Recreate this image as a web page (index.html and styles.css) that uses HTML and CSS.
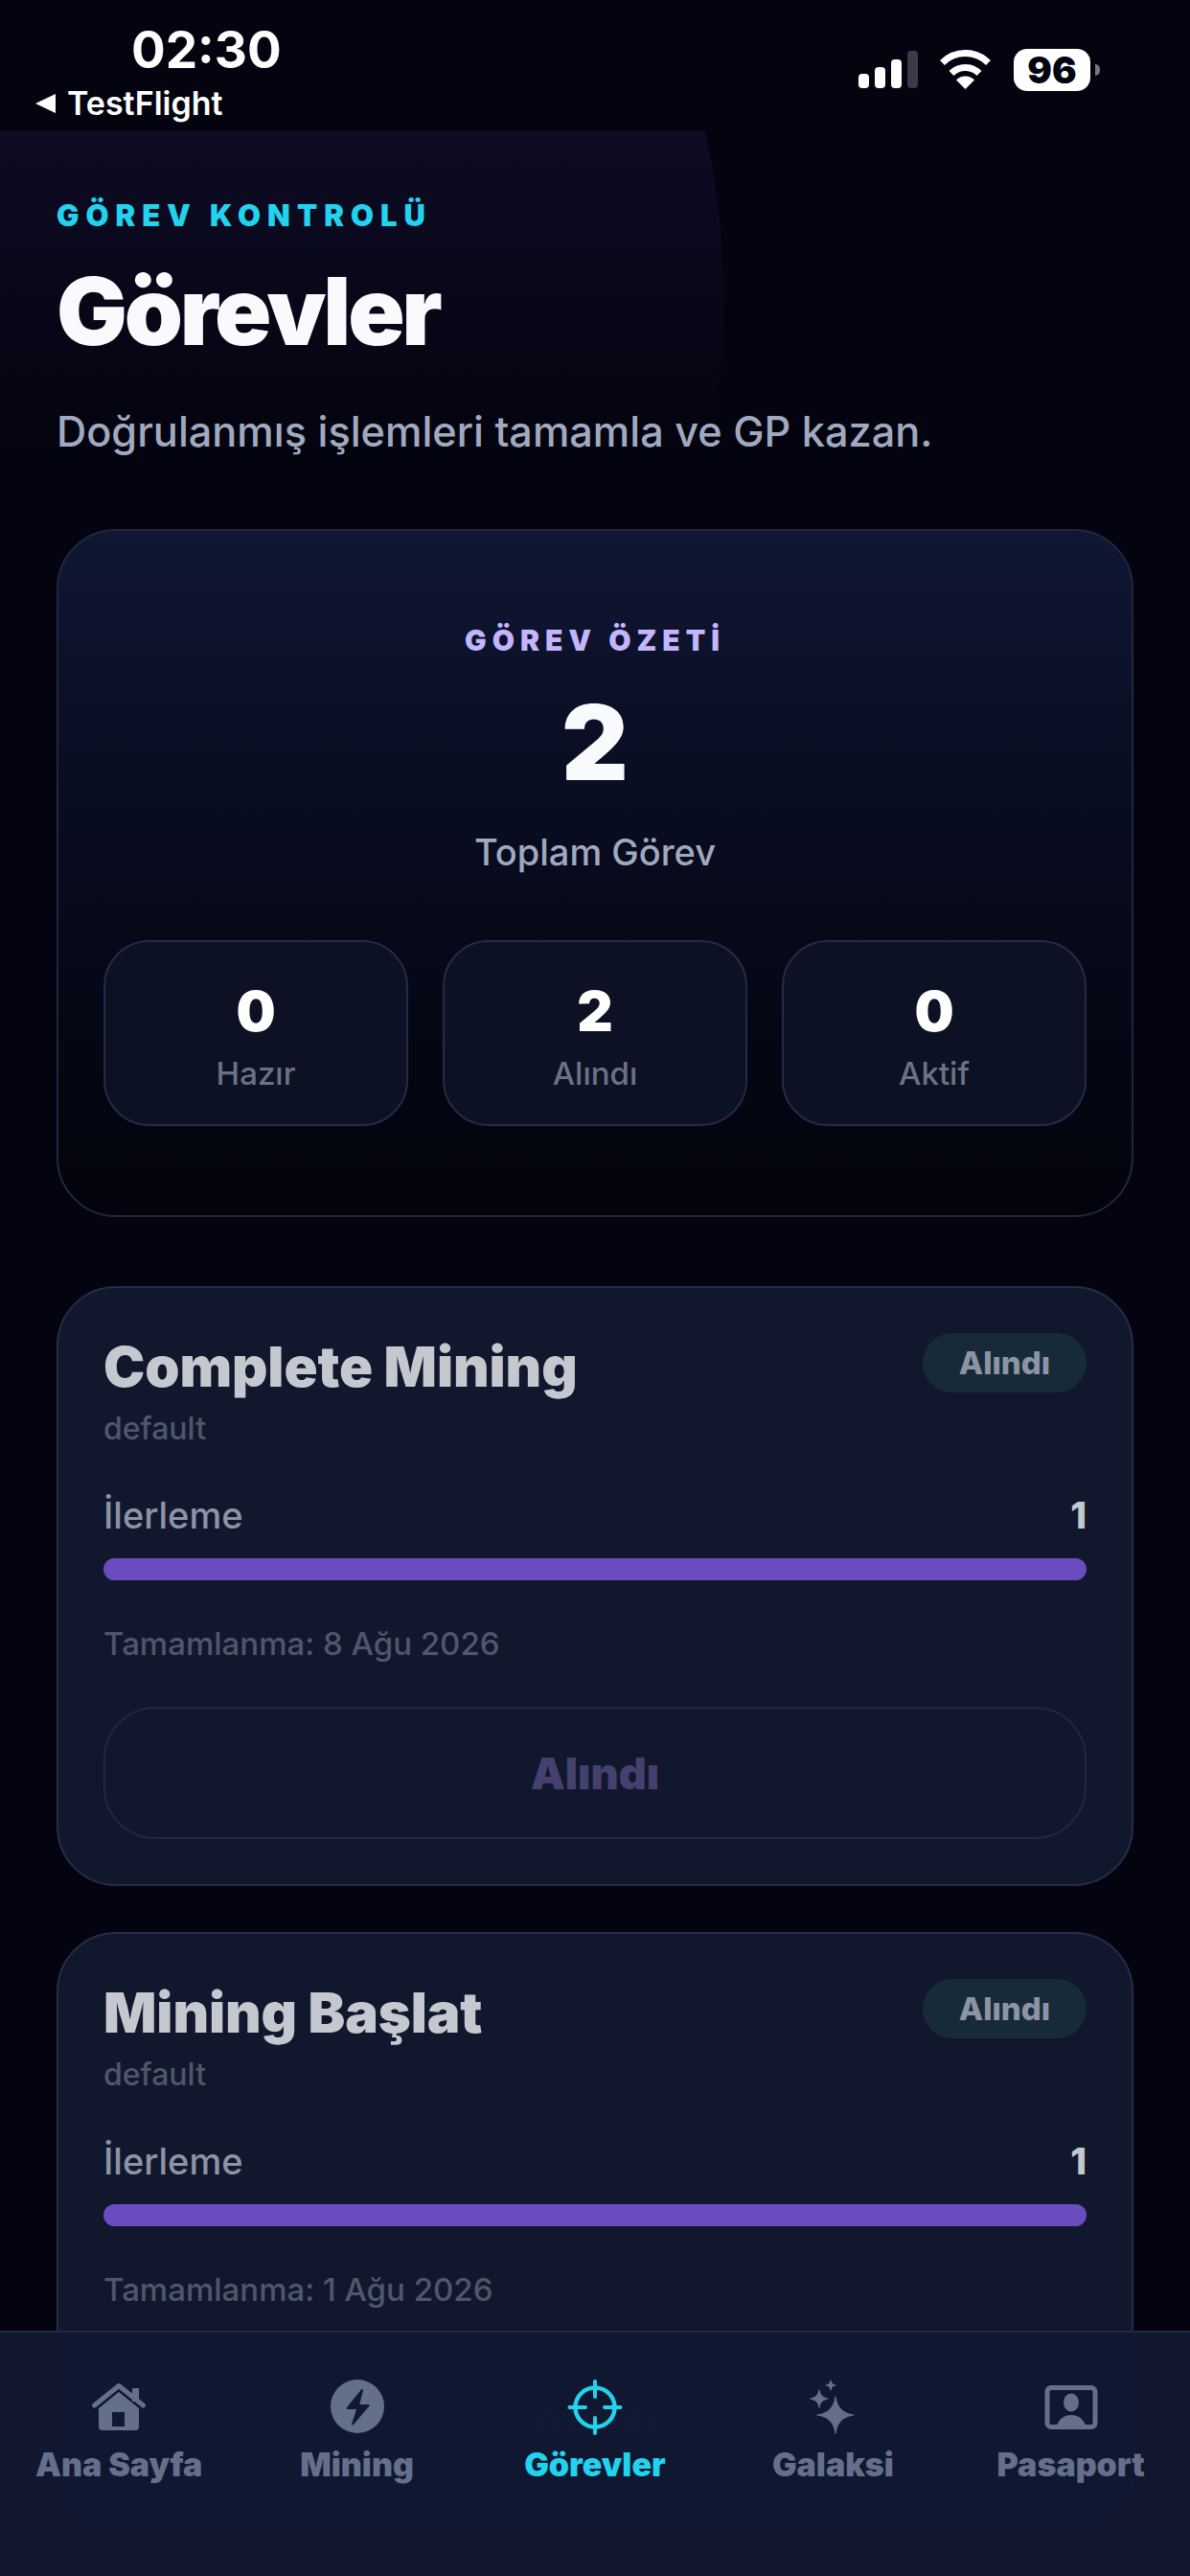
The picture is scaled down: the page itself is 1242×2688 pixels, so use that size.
FILE: index.html
```html
<!DOCTYPE html>
<html lang="tr">
<head>
  <meta charset="UTF-8" />
  <meta name="viewport" content="width=device-width, initial-scale=1" />
  <title>Görevler</title>
  <link rel="stylesheet" href="styles.css">
</head>
<body>

<div class="app">

  <div class="status-bar">
    <div class="status-left">
      <div class="status-time">02:30</div>
      <div class="status-back"><span class="back-arrow"></span>TestFlight</div>
    </div>
    <div class="status-right">
      <div class="signal">
        <span class="sig sig-1"></span>
        <span class="sig sig-2"></span>
        <span class="sig sig-3"></span>
        <span class="sig sig-4"></span>
      </div>
      <svg class="wifi" width="55" height="41" viewBox="0 0 55 41">
        <path d="M3.5 13.5A34 34 0 0 1 51.5 13.5" fill="none" stroke="#fff" stroke-width="7"/>
        <path d="M13 24.5A20.5 20.5 0 0 1 42 24.5" fill="none" stroke="#fff" stroke-width="7"/>
        <path d="M27.5 41L18 31.5A13.5 13.5 0 0 1 37 31.5Z" fill="#fff"/>
      </svg>
      <div class="battery">96</div>
      <span class="battery-nub"></span>
    </div>
  </div>

  <div class="page">
    <div class="header-glow"></div>

    <header class="page-header">
      <div class="kicker">GÖREV KONTROLÜ</div>
      <h1>Görevler</h1>
      <p class="subtitle">Doğrulanmış işlemleri tamamla ve GP kazan.</p>
    </header>

    <section class="summary">
      <div class="summary-label">GÖREV ÖZETİ</div>
      <div class="summary-number">2</div>
      <div class="summary-text">Toplam Görev</div>
      <div class="summary-cells">
        <div class="cell"><div class="cell-value">0</div><div class="cell-label">Hazır</div></div>
        <div class="cell"><div class="cell-value">2</div><div class="cell-label">Alındı</div></div>
        <div class="cell"><div class="cell-value">0</div><div class="cell-label">Aktif</div></div>
      </div>
    </section>

    <section class="task">
      <div class="task-head">
        <h2>Complete Mining</h2>
        <span class="badge">Alındı</span>
      </div>
      <div class="task-type">default</div>
      <div class="progress-row"><span>İlerleme</span><strong>1</strong></div>
      <div class="bar"></div>
      <div class="task-date">Tamamlanma: 8 Ağu 2026</div>
      <button class="task-btn" type="button">Alındı</button>
    </section>

    <section class="task">
      <div class="task-head">
        <h2>Mining Başlat</h2>
        <span class="badge">Alındı</span>
      </div>
      <div class="task-type">default</div>
      <div class="progress-row"><span>İlerleme</span><strong>1</strong></div>
      <div class="bar"></div>
      <div class="task-date">Tamamlanma: 1 Ağu 2026</div>
      <button class="task-btn" type="button">Alındı</button>
    </section>
  </div>

  <nav class="tabbar">
    <div class="tab">
      <svg width="64" height="64" viewBox="0 0 64 64">
        <path d="M46 12h7v14h-7z" fill="#64708a"/>
        <path d="M6.5 30L32 9.5L57.5 30" fill="none" stroke="#64708a" stroke-width="5" stroke-linecap="round" stroke-linejoin="round"/>
        <path fill-rule="evenodd" d="M11 33L32 16L53 33V52a4 4 0 0 1-4 4H15a4 4 0 0 1-4-4ZM25 37V52H38V37Z" fill="#64708a"/>
      </svg>
      <span>Ana Sayfa</span>
    </div>
    <div class="tab">
      <svg width="64" height="64" viewBox="0 0 64 64">
        <circle cx="32" cy="31" r="28" fill="#64708a"/>
        <path d="M37 14L21.5 33H32.5L27 49.5L43.5 30H33Z" fill="#111831" stroke="#111831" stroke-width="2" stroke-linejoin="round"/>
      </svg>
      <span>Mining</span>
    </div>
    <div class="tab tab-active">
      <svg width="64" height="64" viewBox="0 0 64 64" fill="none" stroke="#22d3ee" stroke-linecap="round">
        <circle cx="32" cy="32" r="20.5" stroke-width="4.5"/>
        <path d="M5.5 32H22M42 32H58.5M32 5V21M32 43V59" stroke-width="4"/>
      </svg>
      <span>Görevler</span>
    </div>
    <div class="tab">
      <svg width="64" height="64" viewBox="0 0 64 64" fill="#64708a" stroke="#64708a" stroke-width="1.2" stroke-linejoin="round">
        <path d="M35 21Q37 38 54 40Q37 42 35 59Q33 42 16 40Q33 38 35 21Z"/>
        <path d="M18 14Q19 22 27 23Q19 24 18 32Q17 24 9 23Q17 22 18 14Z"/>
        <path d="M30 4Q30.5 8.5 35 9Q30.5 9.5 30 14Q29.5 9.5 25 9Q29.5 8.5 30 4Z"/>
      </svg>
      <span>Galaksi</span>
    </div>
    <div class="tab">
      <svg width="64" height="64" viewBox="0 0 64 64" fill="#64708a">
        <rect x="7" y="11.5" width="50" height="41" rx="4" fill="none" stroke="#64708a" stroke-width="5"/>
        <ellipse cx="32" cy="27" rx="8" ry="9.5"/>
        <path d="M17 52C18.5 44 25 40 32 40C39 40 45.5 44 47 52Z"/>
      </svg>
      <span>Pasaport</span>
    </div>
  </nav>

</div>

</body>
</html>
```

FILE: styles.css
```css
* {
  box-sizing: border-box;
}
html, body {
  margin: 0;
  padding: 0;
  background: #03040f;
}
body {
  font-family: Inter, "Noto Sans", sans-serif;
  color: #fff;
}
.app {
  position: relative;
  width: 1242px;
  height: 2688px;
  overflow: hidden;
  background: #03040f;
}

/* status bar */
.status-bar {
  display: flex;
  justify-content: space-between;
  height: 136px;
}
.status-left {
  padding: 26px 0 0 37px;
}
.status-time {
  padding-left: 100px;
  font-size: 53px;
  line-height: 52px;
  font-weight: 700;
}
.status-back {
  display: flex;
  align-items: center;
  margin-top: 11px;
  font-size: 34px;
  line-height: 38px;
  font-weight: 600;
}
.back-arrow {
  width: 0;
  height: 0;
  margin-right: 12px;
  border-top: 10px solid transparent;
  border-bottom: 10px solid transparent;
  border-right: 21px solid #fff;
}
.status-right {
  display: flex;
  align-items: flex-start;
  padding: 51px 94px 0 0;
}
.signal {
  display: flex;
  align-items: flex-end;
  gap: 6px;
  height: 41px;
  margin-right: 22px;
}
.sig {
  width: 11px;
  background: #fff;
  border-radius: 4px;
}
.sig-1 { height: 15px; }
.sig-2 { height: 22px; }
.sig-3 { height: 30px; }
.sig-4 { height: 39px; background: #3a3a48; }
.wifi {
  margin: 1px 23px 0 0;
}
.battery {
  width: 80px;
  height: 44px;
  border-radius: 14px;
  background: #fff;
  color: #03040f;
  font-size: 38px;
  line-height: 44px;
  font-weight: 900;
  text-align: center;
}
.battery-nub {
  width: 5px;
  height: 12px;
  margin: 16px 0 0 5px;
  background: #77777f;
  border-radius: 0 6px 6px 0;
}

/* page */
.page {
  position: relative;
  overflow: hidden;
  height: 2552px;
  padding: 0 59px;
}
.header-glow {
  position: absolute;
  left: -847px;
  top: -626px;
  width: 1602px;
  height: 1602px;
  border-radius: 50%;
  background: linear-gradient(180deg, #03040f 0, #03040f 626px, #0e0b24 626px, #03040f 960px);
}
.page-header {
  position: relative;
  padding: 72px 0 77px;
}
.kicker {
  font-size: 31px;
  line-height: 34px;
  font-weight: 900;
  letter-spacing: 7px;
  color: #22d3ee;
}
h1 {
  margin: 28px 0 0;
  font-size: 98px;
  line-height: 110px;
  font-weight: 900;
  letter-spacing: -3.2px;
  color: #f8fafc;
}
.subtitle {
  margin: 45px 0 0;
  font-size: 43.25px;
  line-height: 50px;
  font-weight: 500;
  color: #a1a9bf;
}

/* summary */
.summary {
  position: relative;
  height: 718px;
  padding: 96px 47px 0;
  margin-bottom: 72px;
  border: 2px solid #23263f;
  border-radius: 62px;
  background: linear-gradient(180deg, #101733 0%, #0a0f25 30%, #060918 60%, #02030c 100%);
  text-align: center;
}
.summary-label {
  font-size: 30px;
  line-height: 36px;
  font-weight: 900;
  letter-spacing: 6px;
  color: #c4b5fd;
}
.summary-number {
  margin-top: 29px;
  font-size: 108px;
  line-height: 120px;
  font-weight: 900;
  color: #f8fafc;
}
.summary-text {
  margin-top: 32px;
  font-size: 38px;
  line-height: 44px;
  font-weight: 500;
  color: #a1a9bf;
}
.summary-cells {
  display: grid;
  grid-template-columns: repeat(3, 1fr);
  gap: 36px;
  margin-top: 70px;
}
.cell {
  height: 194px;
  padding-top: 40px;
  border: 2px solid #272a47;
  border-radius: 48px;
  background: #0c1123;
}
.cell-value {
  font-size: 58px;
  line-height: 64px;
  font-weight: 900;
}
.cell-label {
  margin-top: 13px;
  font-size: 33px;
  line-height: 40px;
  font-weight: 500;
  color: #6b7285;
}

/* task cards */
.task {
  position: relative;
  padding: 47px 47px 47px;
  margin-bottom: 48px;
  border: 2px solid #262c4a;
  border-radius: 62px;
  background: #11182e;
}
.task-head {
  display: flex;
  justify-content: space-between;
  align-items: flex-start;
}
h2 {
  margin: 3px 0 1px;
  font-size: 58px;
  line-height: 64px;
  font-weight: 900;
  letter-spacing: -0.1px;
  color: #c6c8d0;
}
.badge {
  width: 171px;
  height: 62px;
  border-radius: 31px;
  background: #162b37;
  color: #8d94a6;
  font-size: 33px;
  line-height: 62px;
  font-weight: 800;
  text-align: center;
}
.task-type {
  margin-top: 14px;
  font-size: 32px;
  line-height: 36px;
  font-weight: 500;
  color: #50566c;
}
.progress-row {
  display: flex;
  justify-content: space-between;
  margin-top: 49px;
  font-size: 38px;
  line-height: 46px;
  font-weight: 500;
  color: #8e93a5;
}
.progress-row strong {
  font-weight: 800;
  color: #c6c8d0;
}
.bar {
  height: 23px;
  margin-top: 22px;
  border-radius: 12px;
  background: #6b4bc0;
}
.task-date {
  margin-top: 46px;
  font-size: 33px;
  line-height: 40px;
  font-weight: 500;
  color: #50566c;
}
.task-btn {
  display: block;
  width: 100%;
  height: 138px;
  margin-top: 46px;
  border: 2px solid #222741;
  border-radius: 54px;
  background: transparent;
  color: #46406f;
  font-family: inherit;
  font-size: 45px;
  font-weight: 900;
}

/* bottom tabs */
.tabbar {
  position: absolute;
  left: 0;
  right: 0;
  bottom: 0;
  display: grid;
  grid-template-columns: repeat(5, 1fr);
  height: 256px;
  padding-top: 46px;
  border-top: 2px solid #21273f;
  background: rgba(17, 24, 49, 0.97);
}
.tab {
  display: flex;
  flex-direction: column;
  align-items: center;
  color: #64708a;
  font-size: 34px;
  line-height: 40px;
  font-weight: 900;
}
.tab span {
  margin-top: 8px;
}
.tab-active {
  color: #22d3ee;
}
```
